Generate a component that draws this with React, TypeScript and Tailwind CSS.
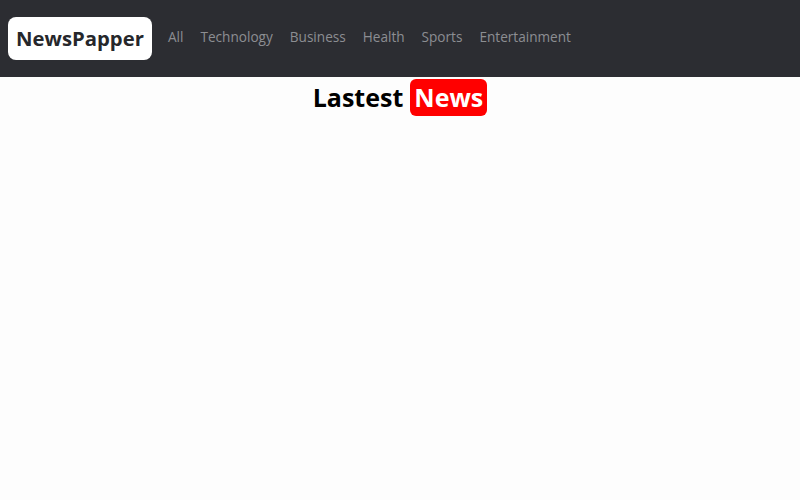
import React from 'react';

const categories = ['All', 'Technology', 'Business', 'Health', 'Sports', 'Entertainment'];

export default function App() {
  return (
    <div className="min-h-[500px] bg-[#fdfdfd] font-['Open_Sans',sans-serif]">
      <nav className="h-[77px] bg-[#2c2d32] flex items-center px-2">
        <div className="bg-white rounded-lg h-[43px] w-[144px] flex items-center justify-center">
          <span className="text-[20.3px] font-bold text-[#26272b]">NewsPapper</span>
        </div>
        <ul className="flex items-center gap-[17px] ml-4 -mt-[3px]">
          {categories.map((c) => (
            <li key={c} className="text-[13.6px] text-[#8c8e92]">
              {c}
            </li>
          ))}
        </ul>
      </nav>
      <h2 className="mt-[2px] flex justify-center items-center gap-[7px] text-[25px] font-bold text-black leading-none">
        <span>Lastest</span>
        <span className="bg-[#ff0000] text-white rounded-md h-[37px] w-[77px] flex items-center justify-center">
          News
        </span>
      </h2>
    </div>
  );
}
